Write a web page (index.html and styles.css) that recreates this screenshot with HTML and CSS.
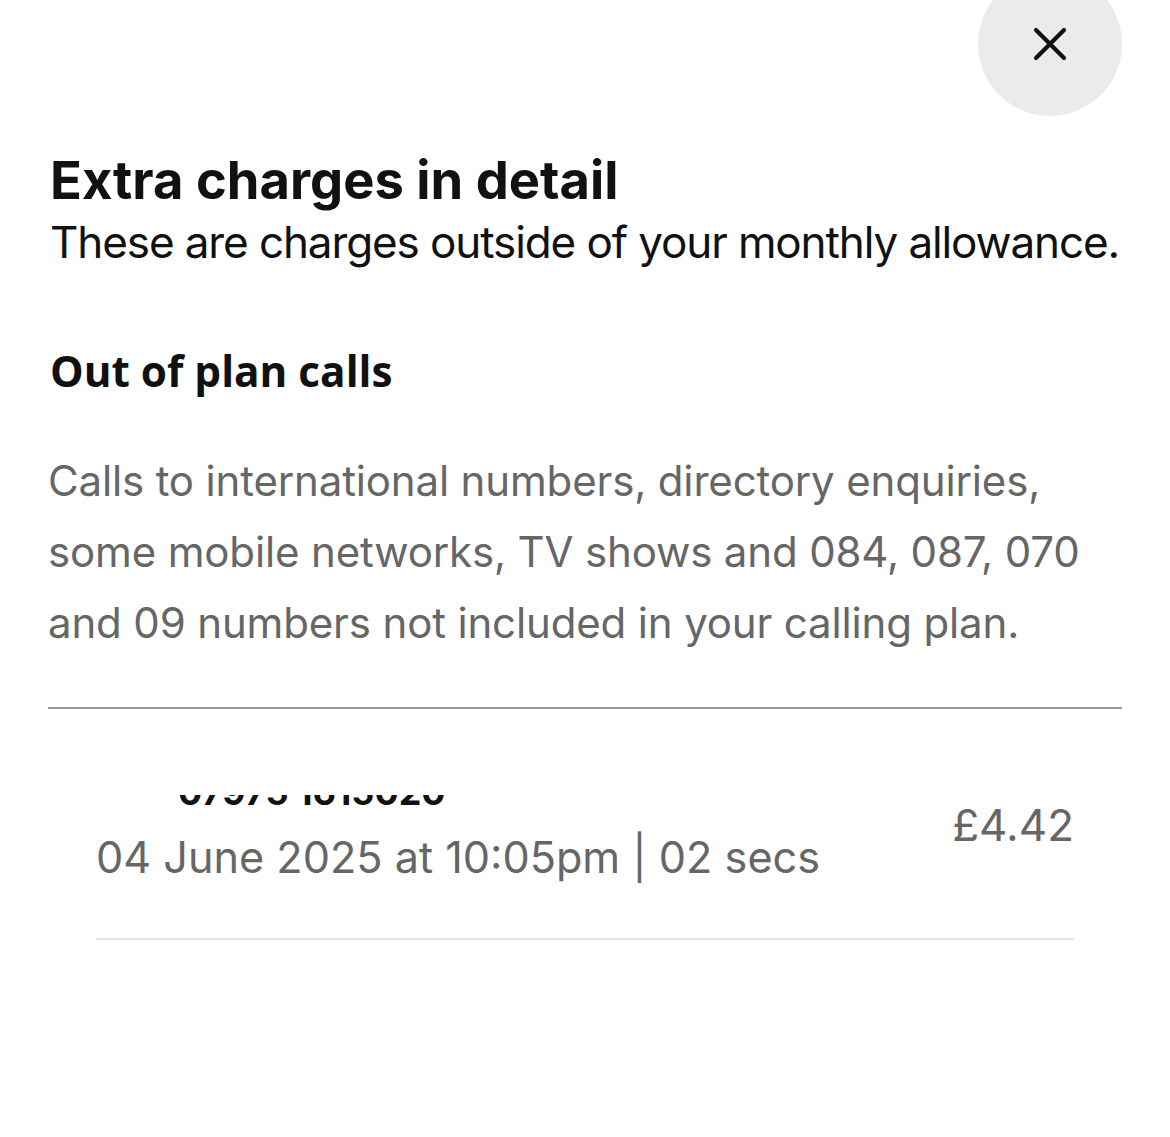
FILE: index.html
```html
<!DOCTYPE html>
<html lang="en">
<head>
<meta charset="utf-8">
<title>Extra charges in detail</title>
<link rel="stylesheet" href="styles.css">
</head>
<body>
<div class="sheet">
  <div class="topbar">
    <button class="close" aria-label="Close">
      <svg width="36" height="36" viewBox="0 0 36 36"><path d="M4 4 L32 32 M32 4 L4 32" stroke="#111" stroke-width="4.2" stroke-linecap="round" fill="none"/></svg>
    </button>
  </div>
  <h1 class="title">Extra charges in detail</h1>
  <p class="subtitle">These are charges outside of your monthly allowance.</p>
  <h2 class="section">Out of plan calls</h2>
  <p class="desc">Calls to international numbers, directory enquiries, some mobile networks, TV shows and 084, 087, 070 and 09 numbers not included in your calling plan.</p>
  <div class="divider"></div>
  <div class="list">
    <div class="item">
      <div class="info">
        <div class="number-clip"><span class="number">07975 1615020</span></div>
        <div class="date">04 June 2025 at 10:05pm | 02 secs</div>
      </div>
      <div class="price">£4.42</div>
    </div>
  </div>
</div>
</body>
</html>
```
FILE: styles.css
```css
html, body {
  margin: 0;
  padding: 0;
  background: #fff;
}
body {
  font-family: Inter, "Noto Sans", sans-serif;
  color: #111;
}
.sheet {
  padding: 0 48px 0 48px;
}
.topbar {
  display: flex;
  justify-content: flex-end;
  margin-top: -28px;
}
.close {
  width: 144px;
  height: 144px;
  border-radius: 50%;
  border: none;
  background: #ebebeb;
  display: flex;
  align-items: center;
  justify-content: center;
  padding: 0;
}
.title {
  margin: 34px 0 0 2px;
  font-size: 52.5px;
  line-height: 60px;
  font-weight: 700;
}
.subtitle {
  margin: 0 0 0 2px;
  font-size: 44px;
  line-height: 64px;
  letter-spacing: -1.1px;
  font-weight: 400;
  white-space: nowrap;
}
.section {
  margin: 67px 0 0 2px;
  font-family: "Open Sans", sans-serif;
  font-size: 42.3px;
  line-height: 60px;
  font-weight: 700;
}
.desc {
  margin: 44px 0 0 0;
  font-size: 42px;
  line-height: 71px;
  letter-spacing: -0.15px;
  color: #666;
}
.divider {
  margin-top: 49px;
  height: 2px;
  background: #9a9a9a;
}
.list {
  padding: 0 48px;
}
.item {
  display: flex;
  justify-content: space-between;
  align-items: flex-start;
  padding-top: 86px;
  padding-bottom: 51px;
  border-bottom: 2px solid #d6e8eb;
}
.number-clip {
  height: 12px;
  overflow: hidden;
  margin-left: 82px;
  display: flex;
  align-items: flex-end;
}
.number {
  font-size: 36px;
  font-weight: 700;
  line-height: 30px;
  color: #111;
  white-space: nowrap;
  display: block;
}
.date {
  margin-top: 20px;
  font-size: 43.2px;
  line-height: 60px;
  color: #666;
}
.price {
  font-size: 44px;
  line-height: 60px;
  color: #666;
}
```
